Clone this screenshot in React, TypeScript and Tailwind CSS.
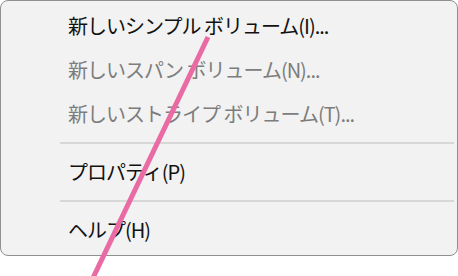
import React from 'react';

interface MenuItem {
  label: string;
  disabled?: boolean;
}

const GROUPS: MenuItem[][] = [
  [
    { label: '新しいシンプル ボリューム(I)...' },
    { label: '新しいスパン ボリューム(N)...', disabled: true },
    { label: '新しいストライプ ボリューム(T)...', disabled: true },
  ],
  [{ label: 'プロパティ(P)' }],
  [{ label: 'ヘルプ(H)' }],
];

const App: React.FC = () => {
  return (
    <div
      className="relative w-[458px] h-[276px] bg-white overflow-hidden"
      style={{ fontFamily: '"Noto Sans CJK JP", "Noto Sans", sans-serif' }}
    >
      <div className="w-[458px] h-[256px] bg-[#f2f2f2] border border-[#8f8f8f] rounded-[8px] flex flex-col py-[3px] pr-[3px]">
        {GROUPS.map((group, gi) => (
          <React.Fragment key={gi}>
            {gi > 0 && (
              <div className="h-[14px] flex items-center pl-[59px]">
                <div className="h-[2px] w-full bg-[#d7d7d7]" />
              </div>
            )}
            {group.map((item) => (
              <div
                key={item.label}
                className={`h-[44px] flex items-center pl-[67px] text-[20px] tracking-[-1px] ${
                  item.disabled ? 'text-[#7d7d7d]' : 'text-[#111]'
                }`}
              >
                {item.label}
              </div>
            ))}
          </React.Fragment>
        ))}
      </div>

      {/* annotation stroke */}
      <svg className="absolute left-0 top-0 pointer-events-none" width="458" height="276">
        <line x1="208" y1="37" x2="92" y2="280" stroke="#ea6aa4" strokeWidth="5" />
      </svg>
    </div>
  );
};

export default App;
